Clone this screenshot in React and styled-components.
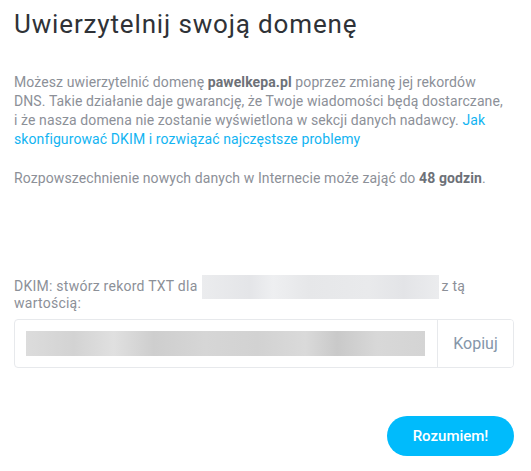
import React from 'react'
import styled, { createGlobalStyle } from 'styled-components'

const GlobalStyle = createGlobalStyle`
  html, body {
    margin: 0;
    padding: 0;
    background: #fff;
  }
  body {
    font-family: Roboto, "Noto Sans", "Liberation Sans", sans-serif;
    -webkit-font-smoothing: antialiased;
  }
`

const Container = styled.div`
  width: 531px;
  box-sizing: border-box;
  padding: 9px 17px 16px 14px;
`

const Title = styled.h1`
  margin: 0;
  font-size: 26px;
  line-height: 31px;
  font-weight: 400;
  letter-spacing: 0.85px;
  color: #2f3237;
`

const Text = styled.p`
  margin: ${(p) => p.$top || 0}px 0 0;
  max-width: 494px;
  font-size: 14px;
  line-height: 19px;
  color: #8c9098;
  letter-spacing: 0.1px;
`

const Strong = styled.b`
  font-weight: 700;
  color: #6d7178;
`

const Link = styled.a`
  color: #12b4f2;
  text-decoration: none;
`

const Label = styled.div`
  margin-top: 90px;
  width: 470px;
  font-size: 14px;
  line-height: 16px;
  letter-spacing: 0.25px;
  color: #8c9098;
`

const Hidden = styled.span`
  display: inline-block;
  width: 237px;
  height: 24px;
  margin: -4px 3px -4px 4px;
  vertical-align: middle;
  background: linear-gradient(
    to right,
    #ebecee 0%,
    #e4e5e8 20%,
    #eeeff1 30%,
    #e6e7e9 45%,
    #e9eaec 70%,
    #e3e4e7 85%,
    #ebecee 100%
  );
`

const Field = styled.div`
  margin-top: 8px;
  display: flex;
  height: 49px;
  box-sizing: border-box;
  border: 1px solid #e7e9ec;
  border-radius: 4px;
  overflow: hidden;
`

const Value = styled.div`
  flex: 1;
  display: flex;
  align-items: center;
  padding: 0 12px 0 11px;
`

const Blur = styled.div`
  width: 100%;
  height: 25px;
  background: linear-gradient(
    to right,
    #dcdcdc 0%,
    #d3d3d3 12%,
    #e0e0e0 22%,
    #cecece 32%,
    #d6d6d6 45%,
    #d2d2d2 58%,
    #dadada 70%,
    #c9c9c9 78%,
    #d8d8d8 88%,
    #d4d4d4 100%
  );
`

const CopyButton = styled.button`
  width: 76px;
  border: 0;
  border-left: 1px solid #e7e9ec;
  background: #fff;
  font-family: inherit;
  font-size: 16px;
  color: #8596a9;
  cursor: pointer;
`

const Footer = styled.div`
  display: flex;
  justify-content: flex-end;
  margin-top: 48px;
`

const Button = styled.button`
  width: 127px;
  height: 40px;
  border: 0;
  border-radius: 20px;
  background: #00bbfc;
  color: #fff;
  font-family: inherit;
  font-size: 15px;
  font-weight: 500;
  cursor: pointer;
`

const App = () => {
  return (
    <>
      <GlobalStyle />
      <Container>
        <Title>Uwierzytelnij swoją domenę</Title>

        <Text $top={33}>
          Możesz uwierzytelnić domenę <Strong>pawelkepa.pl</Strong> poprzez zmianę jej
          rekordów DNS. Takie działanie daje gwarancję, że Twoje wiadomości będą
          dostarczane, i że nasza domena nie zostanie wyświetlona w sekcji danych
          nadawcy. <Link href="#">Jak skonfigurować DKIM i rozwiązać najczęstsze problemy</Link>
        </Text>

        <Text $top={20}>
          Rozpowszechnienie nowych danych w Internecie może zająć do <Strong>48 godzin</Strong>.
        </Text>

        <Label>
          DKIM: stwórz rekord TXT dla<Hidden />z tą wartością:
        </Label>

        <Field>
          <Value>
            <Blur />
          </Value>
          <CopyButton>Kopiuj</CopyButton>
        </Field>

        <Footer>
          <Button>Rozumiem!</Button>
        </Footer>
      </Container>
    </>
  )
}

export default App
